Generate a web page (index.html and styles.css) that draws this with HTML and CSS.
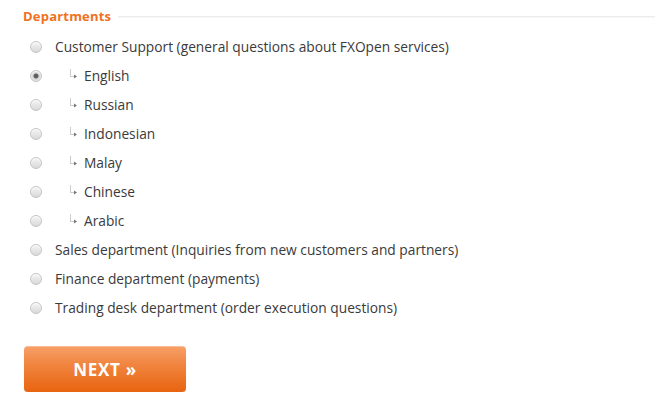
FILE: index.html
```html
<!DOCTYPE html>
<html lang="en">
<head>
    <meta charset="UTF-8">
    <title>Departments</title>
    <link rel="stylesheet" href="styles.css">
</head>
<body>
    <div class="departments">
        <div class="legend">
            <h3>Departments</h3>
            <span class="rule"></span>
        </div>

        <ul class="dept-list">
            <li><label><input type="radio" name="dept"> Customer Support (general questions about FXOpen services)</label></li>
            <li class="sub"><label><input type="radio" name="dept" checked> <svg class="arrow" width="9" height="10" viewBox="0 0 9 10"><path d="M1.5 0.5V7.5H5" fill="none" stroke="#999" stroke-width="1" stroke-dasharray="1 1"/><path d="M5 5.5L8 7.5L5 9.5Z" fill="#777"/></svg>English</label></li>
            <li class="sub"><label><input type="radio" name="dept"> <svg class="arrow" width="9" height="10" viewBox="0 0 9 10"><path d="M1.5 0.5V7.5H5" fill="none" stroke="#999" stroke-width="1" stroke-dasharray="1 1"/><path d="M5 5.5L8 7.5L5 9.5Z" fill="#777"/></svg>Russian</label></li>
            <li class="sub"><label><input type="radio" name="dept"> <svg class="arrow" width="9" height="10" viewBox="0 0 9 10"><path d="M1.5 0.5V7.5H5" fill="none" stroke="#999" stroke-width="1" stroke-dasharray="1 1"/><path d="M5 5.5L8 7.5L5 9.5Z" fill="#777"/></svg>Indonesian</label></li>
            <li class="sub"><label><input type="radio" name="dept"> <svg class="arrow" width="9" height="10" viewBox="0 0 9 10"><path d="M1.5 0.5V7.5H5" fill="none" stroke="#999" stroke-width="1" stroke-dasharray="1 1"/><path d="M5 5.5L8 7.5L5 9.5Z" fill="#777"/></svg>Malay</label></li>
            <li class="sub"><label><input type="radio" name="dept"> <svg class="arrow" width="9" height="10" viewBox="0 0 9 10"><path d="M1.5 0.5V7.5H5" fill="none" stroke="#999" stroke-width="1" stroke-dasharray="1 1"/><path d="M5 5.5L8 7.5L5 9.5Z" fill="#777"/></svg>Chinese</label></li>
            <li class="sub"><label><input type="radio" name="dept"> <svg class="arrow" width="9" height="10" viewBox="0 0 9 10"><path d="M1.5 0.5V7.5H5" fill="none" stroke="#999" stroke-width="1" stroke-dasharray="1 1"/><path d="M5 5.5L8 7.5L5 9.5Z" fill="#777"/></svg>Arabic</label></li>
            <li><label><input type="radio" name="dept"> Sales department (Inquiries from new customers and partners)</label></li>
            <li><label><input type="radio" name="dept"> Finance department (payments)</label></li>
            <li><label><input type="radio" name="dept"> Trading desk department (order execution questions)</label></li>
        </ul>

        <button class="next" type="submit">NEXT &raquo;</button>
    </div>
</body>
</html>
```

FILE: styles.css
```css
body {
    margin: 0;
    padding: 0;
    background-color: #fff;
    font-family: "Open Sans", "Liberation Sans", sans-serif;
    color: #3a3a3a;
}

.departments {
    padding: 8px 0 0 23px;
}

.legend {
    display: flex;
    align-items: center;
}

.legend h3 {
    margin: 0;
    font-size: 13px;
    font-weight: bold;
    color: #ef7121;
    letter-spacing: 0.2px;
    line-height: 17px;
}

.rule {
    flex: 1;
    margin-left: 7px;
    border-top: 1px solid #ececec;
    box-shadow: 0 1px 1px #f6f6f6;
}

.dept-list {
    list-style: none;
    margin: 7px 0 0 0;
    padding: 0;
}

.dept-list li {
    height: 29px;
    display: flex;
    align-items: center;
}

.dept-list label {
    display: flex;
    align-items: center;
    font-size: 13.75px;
    white-space: nowrap;
}

.dept-list input {
    -webkit-appearance: none;
    appearance: none;
    width: 12px;
    height: 12px;
    margin: 0 13px 0 7px;
    border-radius: 50%;
    border: 1px solid #c4c4c4;
    background: linear-gradient(#f4f4f4, #d9d9d9);
    box-shadow: inset 0 1px 1px #fff;
    flex-shrink: 0;
}

.dept-list input:checked {
    background: radial-gradient(circle, #555 0, #666 2px, #d6d6d6 3px, #ececec 6px);
}

.sub .arrow {
    margin: -4px 6px 0 14px;
}

.next {
    margin: 24px 0 0 1px;
    width: 162px;
    height: 46px;
    border: none;
    border-radius: 4px;
    background: linear-gradient(#f8a069, #f08540 40%, #e8640f);
    box-shadow: 0 1px 1px rgba(0, 0, 0, 0.15), inset 0 1px 0 rgba(255, 255, 255, 0.3);
    color: #fff;
    font-family: "Open Sans", "Liberation Sans", sans-serif;
    font-size: 17px;
    font-weight: bold;
    letter-spacing: 0.7px;
    cursor: pointer;
}
```
